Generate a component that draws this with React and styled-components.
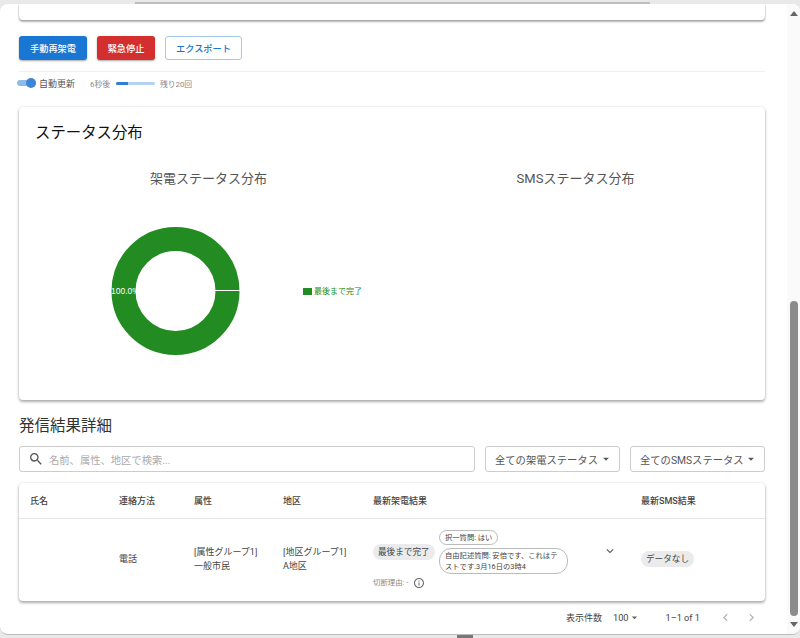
import styled, { createGlobalStyle } from "styled-components";
import { MdSearch, MdArrowDropDown, MdExpandMore, MdChevronLeft, MdChevronRight, MdInfoOutline } from "react-icons/md";

const Global = createGlobalStyle`
  html, body { margin: 0; padding: 0; background: #fff; overflow: hidden; }
  body { font-family: Roboto, "Noto Sans CJK JP", sans-serif; color: #333; }
  * { box-sizing: border-box; }
`;

const Frame = styled.div`
  width: 800px;
  height: 638px;
  display: flex;
  flex-direction: column;
  background: #e9e9e9;
  overflow: hidden;
`;

const TopStrip = styled.div`
  height: 4px;
  flex: none;
  padding-left: 135px;
  display: flex;
  align-items: flex-end;
  &::before {
    content: "";
    width: 515px;
    height: 2px;
    background: #bdbdbd;
  }
`;

const Win = styled.div`
  flex: 1;
  min-height: 0;
  display: flex;
  background: #fff;
  border-radius: 8px 8px 8px 8px;
  border-bottom: 1px solid #bbb;
  overflow: hidden;
`;

const Main = styled.main`
  flex: 1;
  min-width: 0;
  padding: 0 22px 0 19px;
`;

const Stub = styled.div`
  height: 16px;
  background: #fff;
  border-radius: 0 0 4px 4px;
  box-shadow: 0 2px 2px rgba(0, 0, 0, 0.3), 0 0 2px rgba(0, 0, 0, 0.2);
`;

const Actions = styled.div`
  display: flex;
  gap: 10px;
  margin-top: 16px;
  padding-bottom: 11px;
  border-bottom: 1px solid #f0f0f0;
`;

const Btn = styled.button`
  height: 24px;
  width: ${(p) => p.$w}px;
  padding: 0;
  font: 500 9.2px Roboto, "Noto Sans CJK JP", sans-serif;
  border-radius: 3px;
  color: ${(p) => (p.$outline ? "#1976d2" : "#fff")};
  background: ${(p) => (p.$outline ? "#fff" : p.$bg)};
  border: ${(p) => (p.$outline ? "1px solid #a3c8ee" : "none")};
  box-shadow: ${(p) => (p.$outline ? "none" : "0 1px 2px rgba(0,0,0,.35)")};
`;

const AutoRow = styled.div`
  display: flex;
  align-items: center;
  height: 22px;
  margin-left: -2px;
`;

const SwitchWrap = styled.div`
  width: 19px;
  height: 6px;
  background: #90bbe9;
  border-radius: 3px;
  position: relative;
  margin-right: 3px;
  &::after {
    content: "";
    position: absolute;
    right: 0;
    top: -2px;
    width: 10px;
    height: 10px;
    border-radius: 50%;
    background: #3d85d8;
  }
`;

const AutoLabel = styled.span`
  font-size: 9px;
  color: #555;
  width: 51px;
`;

const Tiny = styled.span`
  font-size: 7.8px;
  color: #888;
`;

const Progress = styled.div`
  width: 39px;
  height: 3px;
  margin: 0 5px 0 6px;
  background: #b4d2f2;
  border-radius: 2px;
  overflow: hidden;
  &::before {
    content: "";
    display: block;
    width: 12px;
    height: 3px;
    background: #2f7fd6;
  }
`;

const Card = styled.section`
  height: 293px;
  margin-top: 13px;
  padding: 17px 16px 16px;
  background: #fff;
  border-radius: 4px;
  box-shadow: 0 2px 3px rgba(0, 0, 0, 0.3), 0 0 3px rgba(0, 0, 0, 0.12);
`;

const CardTitle = styled.h2`
  margin: 0;
  font-size: 15.4px;
  font-weight: 400;
  line-height: 18px;
  color: #111;
`;

const ChartGrid = styled.div`
  display: grid;
  grid-template-columns: 1fr 1fr;
  gap: 20px;
  margin-top: 28px;
`;

const ChartTitle = styled.div`
  font-size: 13px;
  line-height: 18px;
  text-align: center;
  color: #555;
`;

const Donut = styled.svg`
  display: block;
  margin-top: 11px;
`;

const SectionTitle = styled.h3`
  margin: 16px 0 0;
  font-size: 15.5px;
  font-weight: 400;
  line-height: 20px;
  color: #333;
`;

const Filters = styled.div`
  display: flex;
  gap: 10px;
  margin-top: 10px;
`;

const Search = styled.div`
  flex: 1;
  height: 26px;
  display: flex;
  align-items: center;
  gap: 5px;
  padding-left: 8px;
  border: 1px solid #ccc;
  border-radius: 3px;
  color: #555;
  font-size: 16px;
`;

const Placeholder = styled.span`
  font-size: 10.3px;
  color: #aaa;
`;

const Select = styled.div`
  width: 135px;
  height: 26px;
  display: flex;
  align-items: center;
  justify-content: space-between;
  padding: 0 6px 0 9px;
  border: 1px solid #ccc;
  border-radius: 3px;
  font-size: 10.3px;
  color: #555;
  white-space: nowrap;
`;

const TableCard = styled.div`
  margin-top: 11px;
  height: 118px;
  background: #fff;
  border-radius: 4px;
  box-shadow: 0 2px 3px rgba(0, 0, 0, 0.3), 0 0 3px rgba(0, 0, 0, 0.12);
`;

const Row = styled.div`
  display: grid;
  grid-template-columns: 89px 75px 89px 90px 268px 1fr;
  height: ${(p) => p.$h}px;
  padding-bottom: ${(p) => (p.$head ? 0 : 2)}px;
  align-items: center;
  border-bottom: ${(p) => (p.$head ? "1px solid #e6e6e6" : "none")};
  font-size: 9px;
  font-weight: ${(p) => (p.$head ? 500 : 400)};
  color: #444;
  line-height: 14px;
`;

const Cell = styled.div`
  padding-left: 11px;
`;

const CallCell = styled(Cell)`
  display: grid;
  grid-template-columns: 66px 140px 1fr;
  grid-template-rows: auto auto;
  row-gap: 3px;
  align-items: center;
`;

const Chip = styled.span`
  display: inline-block;
  padding: 0 5px;
  height: 16px;
  line-height: 16px;
  border-radius: 8px;
  background: #ebebeb;
  color: #444;
  font-size: 8.6px;
  white-space: nowrap;
`;

const Answers = styled.div`
  display: flex;
  flex-direction: column;
  align-items: flex-start;
  gap: 3px;
`;

const OutChip = styled.span`
  padding: 1px 5px;
  border: 1px solid #bbb;
  border-radius: 12px;
  font-size: 7.3px;
  line-height: 11px;
  color: #444;
  width: ${(p) => p.$w}px;
`;

const Expand = styled.div`
  font-size: 14px;
  line-height: 0;
  color: #555;
  padding-left: 24px;
  margin-top: -2px;
`;

const Reason = styled.div`
  grid-column: 1 / 3;
  display: flex;
  align-items: center;
  gap: 5px;
  font-size: 7.4px;
  color: #888;
  line-height: 12px;
  svg { font-size: 12px; color: #666; }
`;

const Pager = styled.div`
  display: flex;
  align-items: center;
  justify-content: flex-end;
  height: 32px;
  font-size: 9.2px;
  color: #444;
  padding-right: 6px;
`;

const PagerLabel = styled.span`
  font-size: 9px;
  margin-right: 11px;
`;

const PagerSelect = styled.span`
  display: flex;
  align-items: center;
  margin-right: 24px;
  svg { font-size: 13px; color: #666; }
`;

const PagerCount = styled.span`
  margin-right: 18px;
`;

const PagerBtn = styled.span`
  display: flex;
  font-size: 15px;
  color: #b5b5b5;
  margin-left: ${(p) => p.$ml || 0}px;
`;

const Bar = styled.aside`
  width: 13px;
  flex: none;
  display: flex;
  flex-direction: column;
  align-items: center;
  background: #fafafa;
  padding-bottom: 7px;
`;

const Arrow = styled.div`
  width: 0;
  height: 0;
  border-left: 4px solid transparent;
  border-right: 4px solid transparent;
  ${(p) => (p.$up ? "border-bottom: 5px solid #666; margin-top: 7px;" : "border-top: 5px solid #666; margin-top: 6px;")}
`;

const Thumb = styled.div`
  width: 8px;
  height: 315px;
  margin-top: auto;
  background: #8c8c8c;
  border-radius: 4px;
`;

const BottomStrip = styled.div`
  height: 3px;
  flex: none;
  padding-left: 457px;
  &::before {
    content: "";
    display: block;
    width: 16px;
    height: 3px;
    background: #777;
  }
`;

export default function App() {
  return (
    <Frame>
      <Global />
      <TopStrip />
      <Win>
        <Main>
          <Stub />
          <Actions>
            <Btn $w={68} $bg="#1976d2">手動再架電</Btn>
            <Btn $w={58} $bg="#d32f2f">緊急停止</Btn>
            <Btn $w={77} $outline>エクスポート</Btn>
          </Actions>
          <AutoRow>
            <SwitchWrap />
            <AutoLabel>自動更新</AutoLabel>
            <Tiny>6秒後</Tiny>
            <Progress />
            <Tiny>残り20回</Tiny>
          </AutoRow>
          <Card>
            <CardTitle>ステータス分布</CardTitle>
            <ChartGrid>
              <div>
                <ChartTitle>架電ステータス分布</ChartTitle>
                <Donut width="347" height="170">
                  <circle cx="140.5" cy="92" r="52" fill="none" stroke="#228b22" strokeWidth="24" />
                  <rect x="180" y="91" width="25" height="1" fill="#fff" />
                  <text x="76" y="95" fontSize="8.5" fill="#fff" fontFamily="Liberation Sans, sans-serif">100.0%</text>
                  <rect x="268" y="89" width="9" height="7" fill="#228b22" />
                  <text x="279" y="95" fontSize="8" fill="#228b22" fontFamily="Noto Sans CJK JP, sans-serif">最後まで完了</text>
                </Donut>
              </div>
              <div>
                <ChartTitle>SMSステータス分布</ChartTitle>
              </div>
            </ChartGrid>
          </Card>
          <SectionTitle>発信結果詳細</SectionTitle>
          <Filters>
            <Search>
              <MdSearch />
              <Placeholder>名前、属性、地区で検索...</Placeholder>
            </Search>
            <Select>全ての架電ステータス<MdArrowDropDown size={14} /></Select>
            <Select>全てのSMSステータス<MdArrowDropDown size={14} /></Select>
          </Filters>
          <TableCard>
            <Row $head $h={36}>
              <Cell>氏名</Cell>
              <Cell>連絡方法</Cell>
              <Cell>属性</Cell>
              <Cell>地区</Cell>
              <Cell>最新架電結果</Cell>
              <Cell>最新SMS結果</Cell>
            </Row>
            <Row $h={82}>
              <Cell />
              <Cell>電話</Cell>
              <Cell>[属性グループ1]<br />一般市民</Cell>
              <Cell>[地区グループ1]<br />A地区</Cell>
              <CallCell>
                <div><Chip>最後まで完了</Chip></div>
                <Answers>
                  <OutChip>択一質問: はい</OutChip>
                  <OutChip $w={129}>自由記述質問: 安倍です、これはテストです.3月16日の3時4</OutChip>
                </Answers>
                <Expand><MdExpandMore /></Expand>
                <Reason>切断理由: - <MdInfoOutline /></Reason>
              </CallCell>
              <Cell><Chip>データなし</Chip></Cell>
            </Row>
          </TableCard>
          <Pager>
            <PagerLabel>表示件数</PagerLabel>
            <PagerSelect>100<MdArrowDropDown /></PagerSelect>
            <PagerCount>1–1 of 1</PagerCount>
            <PagerBtn><MdChevronLeft /></PagerBtn>
            <PagerBtn $ml={11}><MdChevronRight /></PagerBtn>
          </Pager>
        </Main>
        <Bar>
          <Arrow $up />
          <Thumb />
          <Arrow />
        </Bar>
      </Win>
      <BottomStrip />
    </Frame>
  );
}
